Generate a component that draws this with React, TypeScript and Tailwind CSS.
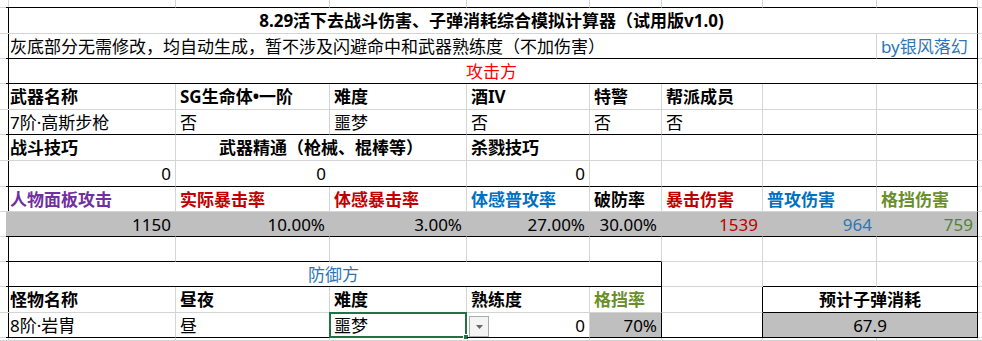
import type { ReactNode } from 'react';

// Excel-style sheet: every cell draws its own right + bottom gridline
function Cell({ className = '', children }: { className?: string; children?: ReactNode }) {
  return (
    <div
      className={`flex items-center overflow-hidden whitespace-nowrap border-r border-b border-[#d4d4d4] px-1 ${className}`}
    >
      {children}
    </div>
  );
}

const FILL = 'bg-[#bfbfbf] border-r-[#bfbfbf]';

export default function App() {
  return (
    <div className="w-[982px] h-[341px] overflow-hidden bg-white text-black text-[17px] leading-none font-['Noto_Sans','Noto_Sans_CJK_SC',sans-serif]">
      <div className="grid grid-cols-[6px_170px_154px_137px_123px_72px_101px_114px_101px_4px] grid-rows-[8px_26px_25px_25px_26px_25px_26px_26px_25px_25px_25px_25px_26px_25px_3px]">
        {/* row 0: strip above the table */}
        <Cell className="px-0" />
        <Cell className="border-b-black" />
        <Cell className="border-b-black" />
        <Cell className="border-b-black" />
        <Cell className="border-b-black" />
        <Cell className="border-b-black" />
        <Cell className="border-b-black" />
        <Cell className="border-b-black" />
        <Cell className="border-b-black" />
        <Cell className="border-r-0 px-0" />

        {/* title */}
        <Cell className="border-r-black px-0" />
        <Cell className="col-span-8 justify-center font-bold border-r-black">
          8.29活下去战斗伤害、子弹消耗综合模拟计算器（试用版v1.0)
        </Cell>
        <Cell className="border-r-0 px-0" />

        {/* note */}
        <Cell className="border-r-black px-0" />
        <Cell className="col-span-7 border-b-black">
          灰底部分无需修改，均自动生成，暂不涉及闪避命中和武器熟练度（不加伤害）
        </Cell>
        <Cell className="border-r-black border-b-black text-[#2e75b6]">by银风落幻</Cell>
        <Cell className="border-r-0 px-0" />

        {/* attacker */}
        <Cell className="border-r-black px-0" />
        <Cell className="col-span-8 justify-center text-[#ff0000] border-r-black border-b-black">攻击方</Cell>
        <Cell className="border-r-0 px-0" />

        <Cell className="border-r-black px-0" />
        <Cell className="font-bold">武器名称</Cell>
        <Cell className="font-bold">SG生命体•一阶</Cell>
        <Cell className="font-bold">难度</Cell>
        <Cell className="font-bold">酒IV</Cell>
        <Cell className="font-bold">特警</Cell>
        <Cell className="font-bold">帮派成员</Cell>
        <Cell />
        <Cell className="border-r-black" />
        <Cell className="border-r-0 px-0" />

        <Cell className="border-r-black px-0" />
        <Cell className="border-b-black">7阶·高斯步枪</Cell>
        <Cell className="border-b-black">否</Cell>
        <Cell className="border-b-black">噩梦</Cell>
        <Cell className="border-b-black">否</Cell>
        <Cell className="border-b-black">否</Cell>
        <Cell className="border-b-black">否</Cell>
        <Cell className="border-b-black" />
        <Cell className="border-r-black border-b-black" />
        <Cell className="border-r-0 px-0" />

        <Cell className="border-r-black px-0" />
        <Cell className="font-bold">战斗技巧</Cell>
        <Cell className="col-span-2 justify-center font-bold">武器精通（枪械、棍棒等）</Cell>
        <Cell className="font-bold">杀戮技巧</Cell>
        <Cell />
        <Cell />
        <Cell />
        <Cell className="border-r-black" />
        <Cell className="border-r-0 px-0" />

        <Cell className="border-r-black px-0" />
        <Cell className="justify-end border-b-black">0</Cell>
        <Cell className="col-span-2 justify-center border-b-black">0</Cell>
        <Cell className="justify-end border-b-black">0</Cell>
        <Cell className="border-b-black" />
        <Cell className="border-b-black" />
        <Cell className="border-b-black" />
        <Cell className="border-r-black border-b-black" />
        <Cell className="border-r-0 px-0" />

        <Cell className="border-r-black px-0" />
        <Cell className="font-bold text-[#7030a0]">人物面板攻击</Cell>
        <Cell className="font-bold text-[#c00000]">实际暴击率</Cell>
        <Cell className="font-bold text-[#c00000]">体感暴击率</Cell>
        <Cell className="font-bold text-[#0070c0]">体感普攻率</Cell>
        <Cell className="font-bold">破防率</Cell>
        <Cell className="font-bold text-[#c00000]">暴击伤害</Cell>
        <Cell className="font-bold text-[#0070c0]">普攻伤害</Cell>
        <Cell className="font-bold text-[#6a8f2a] border-r-black">格挡伤害</Cell>
        <Cell className="border-r-0 px-0" />

        <Cell className="border-r-black px-0" />
        <Cell className={`${FILL} justify-end border-b-black`}>1150</Cell>
        <Cell className={`${FILL} justify-end border-b-black`}>10.00%</Cell>
        <Cell className={`${FILL} justify-end border-b-black`}>3.00%</Cell>
        <Cell className={`${FILL} justify-end border-b-black`}>27.00%</Cell>
        <Cell className={`${FILL} justify-end border-b-black`}>30.00%</Cell>
        <Cell className={`${FILL} justify-end border-b-black text-[#c00000]`}>1539</Cell>
        <Cell className={`${FILL} justify-end border-b-black text-[#2e75b6]`}>964</Cell>
        <Cell className="bg-[#bfbfbf] justify-end border-r-black border-b-black text-[#548235]">759</Cell>
        <Cell className="border-r-0 px-0" />

        {/* spacer row */}
        <Cell className="border-r-black px-0" />
        <Cell className="border-b-black" />
        <Cell className="border-b-black" />
        <Cell className="border-b-black" />
        <Cell className="border-b-black" />
        <Cell className="border-b-black" />
        <Cell />
        <Cell />
        <Cell className="border-r-black" />
        <Cell className="border-r-0 px-0" />

        {/* defender */}
        <Cell className="border-r-black px-0" />
        <Cell className="col-span-5 justify-center text-[#2e75b6] border-r-black border-b-black">防御方</Cell>
        <Cell />
        <Cell className="border-b-black" />
        <Cell className="border-r-black border-b-black" />
        <Cell className="border-r-0 px-0" />

        <Cell className="border-r-black px-0" />
        <Cell className="font-bold">怪物名称</Cell>
        <Cell className="font-bold">昼夜</Cell>
        <Cell className="font-bold">难度</Cell>
        <Cell className="font-bold">熟练度</Cell>
        <Cell className="font-bold text-[#6a8f2a] border-r-black">格挡率</Cell>
        <Cell className="border-r-black" />
        <Cell className="col-span-2 justify-center font-bold border-r-black border-b-black">预计子弹消耗</Cell>
        <Cell className="border-r-0 px-0" />

        <Cell className="border-r-black px-0" />
        <Cell className="border-b-black">8阶·岩胄</Cell>
        <Cell className="border-b-black">昼</Cell>
        <Cell className="relative overflow-visible border-b-black">
          噩梦
          <span className="absolute -left-px -top-px -right-px -bottom-px border-2 border-[#217346]" />
          <span className="absolute -right-[3px] -bottom-[3px] w-[6px] h-[6px] bg-[#217346] border border-white" />
        </Cell>
        <Cell className="relative justify-end border-b-black">
          <span className="absolute left-[2px] top-[3px] w-[20px] h-[21px] flex items-center justify-center bg-[#f4f4f4] border border-[#ababab]">
            <svg width="7" height="4" viewBox="0 0 7 4">
              <path d="M0 0h7L3.5 4z" fill="#666" />
            </svg>
          </span>
          0
        </Cell>
        <Cell className="bg-[#bfbfbf] justify-end border-r-black border-b-black">70%</Cell>
        <Cell className="border-r-black border-b-black" />
        <Cell className="col-span-2 justify-center bg-[#bfbfbf] border-r-black border-b-black">67.9</Cell>
        <Cell className="border-r-0 px-0" />

        {/* row below the table */}
        <Cell className="px-0" />
        <Cell />
        <Cell />
        <Cell />
        <Cell />
        <Cell />
        <Cell />
        <Cell />
        <Cell />
        <Cell className="border-r-0 px-0" />
      </div>
    </div>
  );
}
